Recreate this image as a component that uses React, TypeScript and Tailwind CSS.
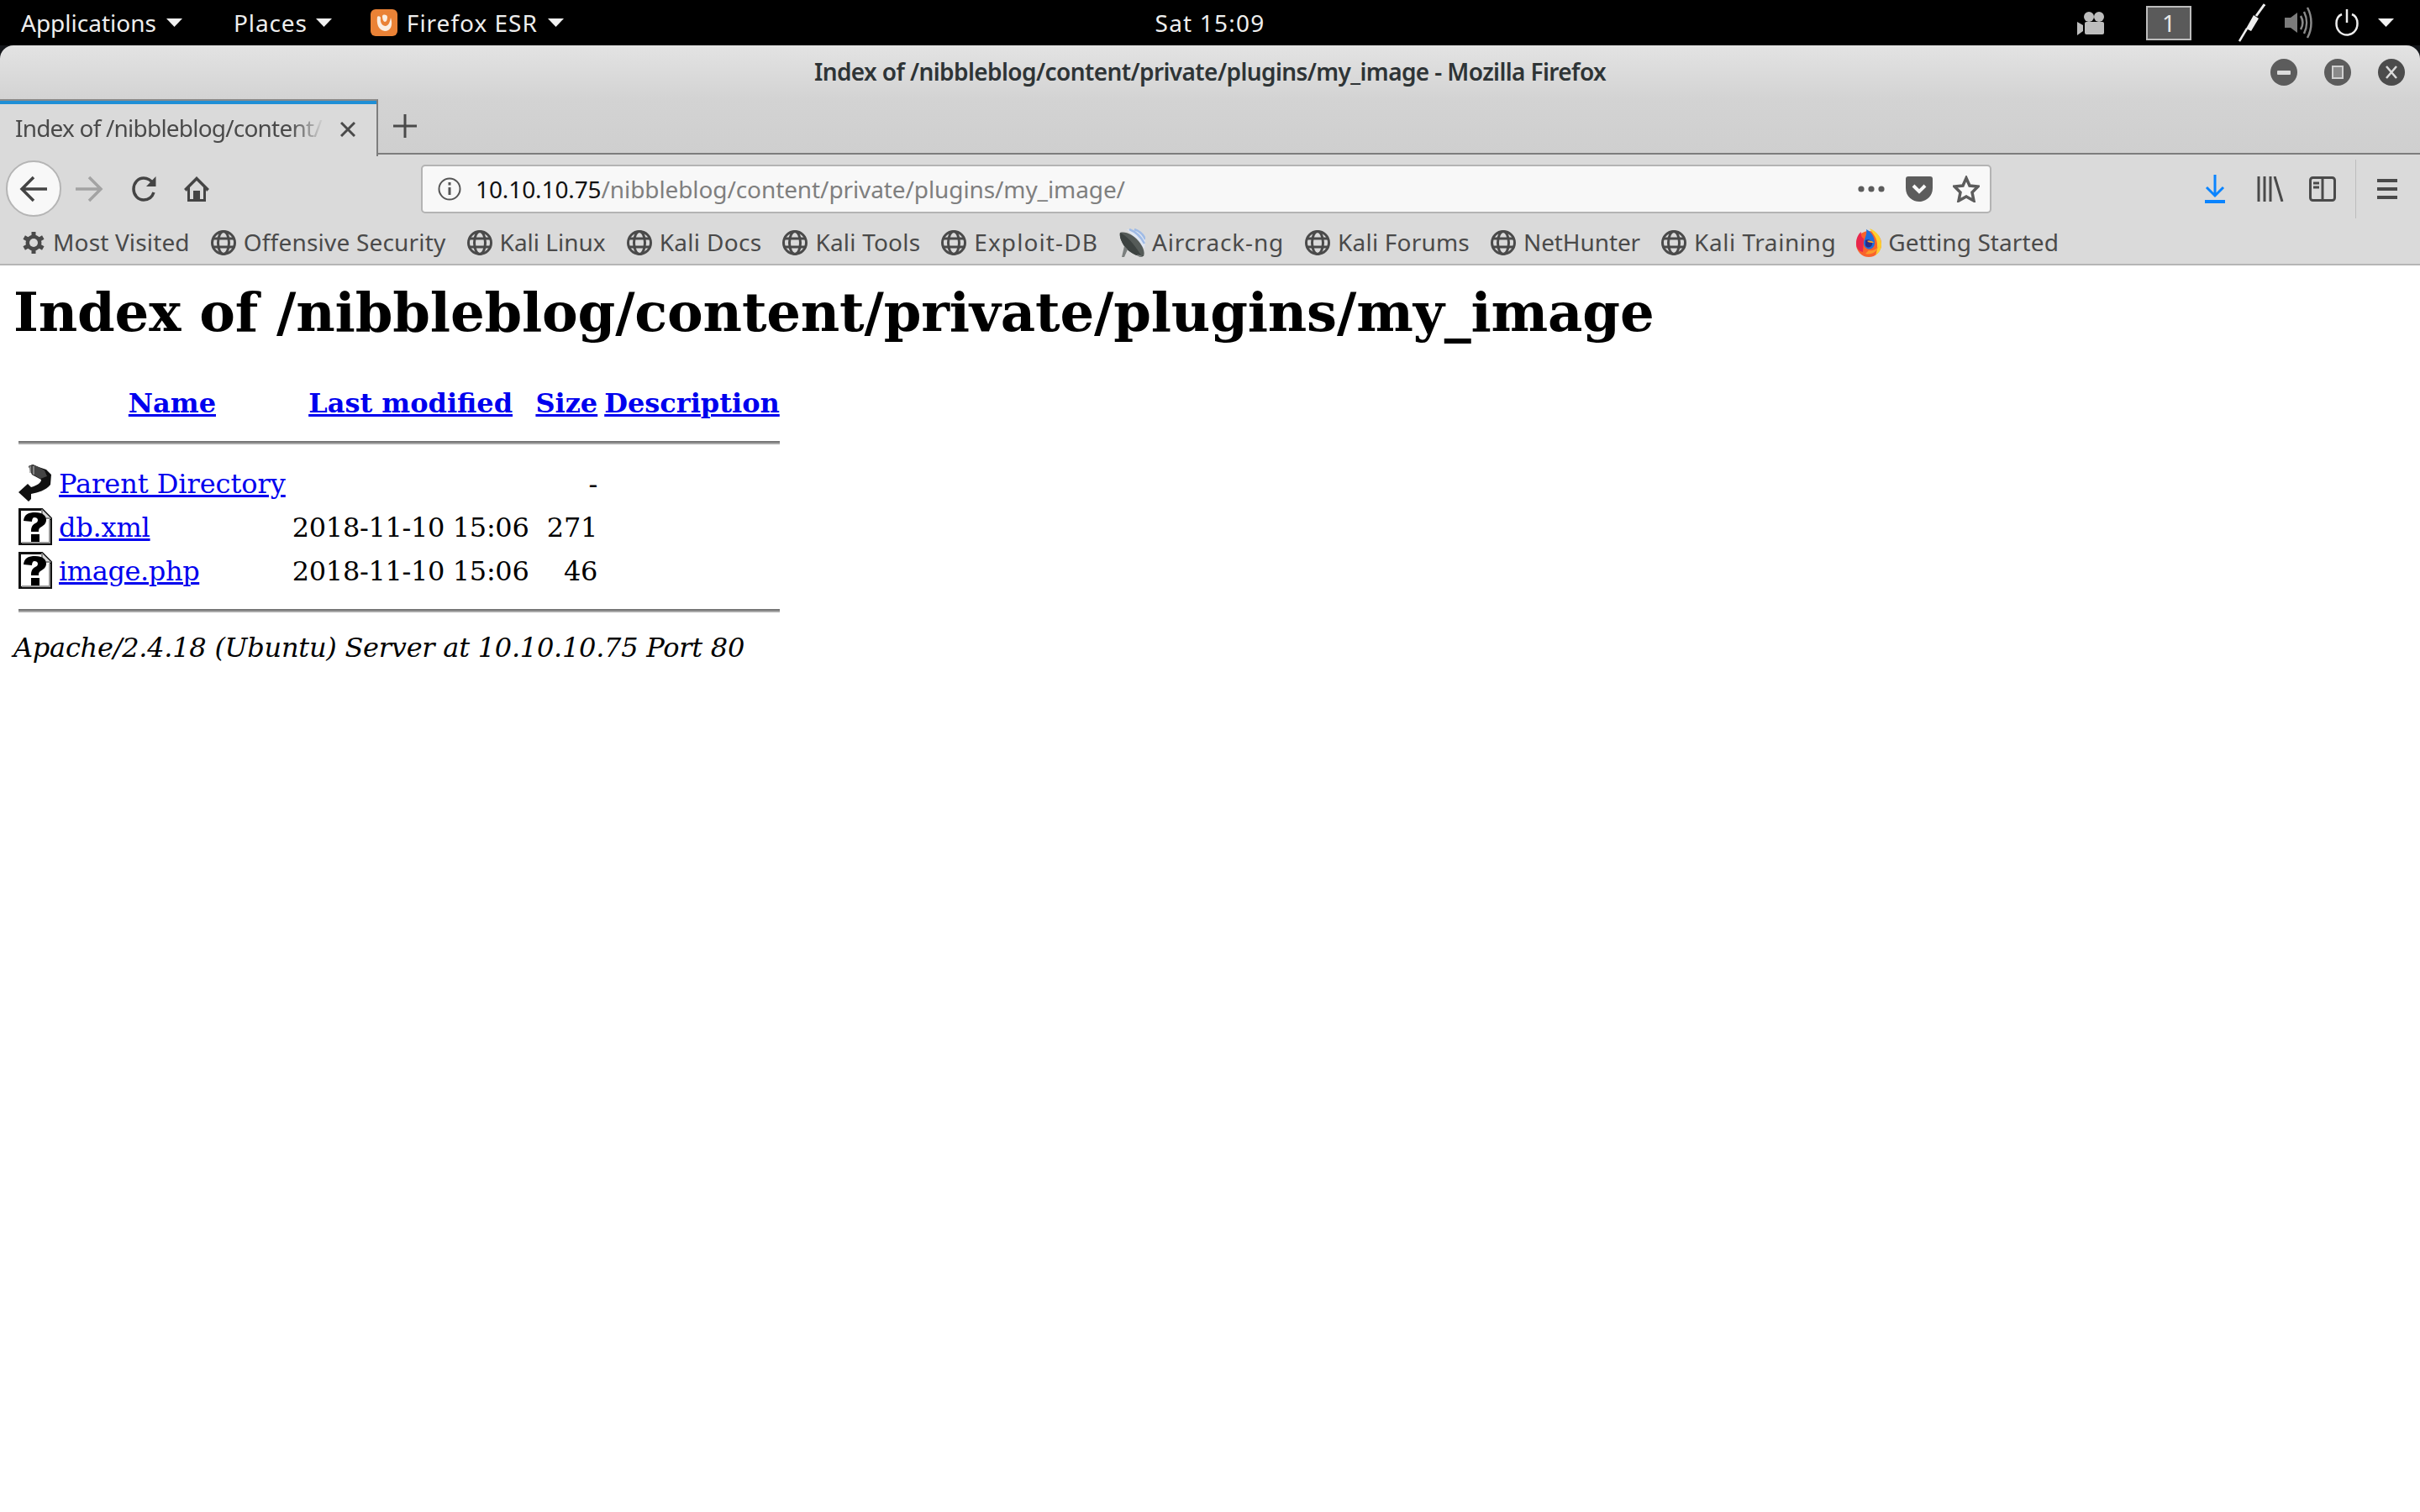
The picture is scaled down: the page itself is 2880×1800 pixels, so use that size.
import React from "react";

const Tri = () => (
  <svg width="19" height="10" viewBox="0 0 19 10" className="shrink-0"><path d="M0 0H19L9.5 10Z" fill="#f2f2f2" /></svg>
);

const Globe = () => (
  <svg width="32" height="32" viewBox="0 0 32 32" fill="none" stroke="#4a4a4a" strokeWidth="3" className="shrink-0">
    <circle cx="16" cy="16" r="13.5" />
    <ellipse cx="16" cy="16" rx="6.5" ry="13.5" />
    <path d="M3 11H29M3 21H29" />
  </svg>
);

const Gear = () => (
  <svg width="30" height="32" viewBox="0 0 30 32" className="shrink-0">
    <g stroke="#4a4a4a" strokeWidth="5">
      <path d="M15 3V29M3.7 9.5L26.3 22.5M3.7 22.5L26.3 9.5" />
    </g>
    <circle cx="15" cy="16" r="9.5" fill="#4a4a4a" />
    <circle cx="15" cy="16" r="5" fill="#dadada" />
  </svg>
);

const Dish = () => (
  <svg width="32" height="34" viewBox="0 0 32 34" className="shrink-0">
    <path d="M10 1L24 3L32 14L31 24Z" fill="#dfe6f2" />
    <path d="M13 1C21 4 27 10 31 18M19 1C25 3 30 8 32 13" stroke="#9fbbe6" strokeWidth="2.5" fill="none" />
    <path d="M2 5C9 3 18 8 24 15C29 21 32 28 30 33C23 34 13 29 7 21C3 15 1 9 2 5Z" fill="#555b58" />
    <path d="M2 5C9 8 18 17 27 32C29 33 30 33 30 33C23 34 13 29 7 21C3 15 1 9 2 5Z" fill="#3c4240" />
    <path d="M7 21L4 34H7L11 25ZM22 31L25 34H29L27 32Z" fill="#7b7f7e" />
  </svg>
);

const FirefoxLogo = () => (
  <svg width="30" height="34" viewBox="0 0 30 34" className="shrink-0">
    <ellipse cx="15" cy="18.5" rx="15" ry="15.5" fill="#f9622c" />
    <path d="M0 18C0 11 3 6 6 4C5 8 7 11 9 12L8 28C3 27 0 23 0 18Z" fill="#e8264c" />
    <path d="M16 0C24 3 30 10 30 19C30 25 27 29 23 32C26 25 26 15 22 9C20 6 18 3 16 0Z" fill="#fdd02f" />
    <path d="M11 30C18 32 25 28 27 20C25 25 20 27 15 26Z" fill="#fb9a2a" />
    <path d="M12 1C18 4 22 10 22 17C22 23 17 26 13 24C9 22 8 17 10 13C11 10 13 6 12 1Z" fill="#1f6fdc" />
    <path d="M11 14C15 12 20 15 19 19C18 23 13 24 11 20Z" fill="#2a2d87" />
    <path d="M13 15C16 14 20 15 21 17C18 17 15 17 13 15Z" fill="#f9a52e" />
  </svg>
);

const bookmarks: [string, React.ReactNode, string][] = [
  ["Most Visited", <Gear />, "tracking-[0.15px]"],
  ["Offensive Security", <Globe />, "tracking-[0.2px]"],
  ["Kali Linux", <Globe />, "tracking-[0px]"],
  ["Kali Docs", <Globe />, "tracking-[0.3px]"],
  ["Kali Tools", <Globe />, "tracking-[0.2px]"],
  ["Exploit-DB", <Globe />, "tracking-[1.1px]"],
  ["Aircrack-ng", <Dish />, "tracking-[0.8px]"],
  ["Kali Forums", <Globe />, "tracking-[0.2px]"],
  ["NetHunter", <Globe />, "tracking-[-0.1px]"],
  ["Kali Training", <Globe />, "tracking-[0.55px]"],
  ["Getting Started", <FirefoxLogo />, "tracking-[0.1px]"],
];

const QIcon = () => (
  <svg width="40" height="44" viewBox="0 0 40 44" className="inline-block align-top">
    <path d="M1.5 1.5H28L38.5 12V42.5H1.5Z" fill="#fff" stroke="#111" strokeWidth="3" />
    <path d="M28 1.5V12H38.5" fill="#d8d8d8" stroke="#888" strokeWidth="2" />
    <path d="M36 40H4V42H38V14H36Z" fill="#999" />
    <path d="M6 15C7 7 12 5 20 5C29 5 33 9 33 14C33 19 29 21 26 23C24 24 24 26 24 28H15C15 23 16 20 20 18C22 17 23 16 23 14C23 12 21 11 19 11C17 11 16 13 16 16Z" fill="#000" />
    <rect x="15" y="31" width="10" height="9" fill="#000" />
  </svg>
);

const BackIcon = () => (
  <svg width="40" height="44" viewBox="0 0 40 44" className="inline-block align-top">
    <path d="M12 2L17 0L24 3L33 6L39 12L38 24C32 31 24 33 15 35V41L12 44L0 33L11 23L15 27C22 25 27 22 27 18L16 12Z" fill="#111" />
    <path d="M12 2L17 0L24 3L31 7L34 14L26 17L16 11Z" fill="#444" />
    <path d="M14 2V10M18 2V12" stroke="#999" strokeWidth="1.5" />
  </svg>
);

const Link = ({ children, className }: { children: React.ReactNode; className?: string }) => (
  <a href="#" className={"text-[#0000ee] underline " + (className ?? "")}>{children}</a>
);

const Th = ({ children }: { children?: React.ReactNode }) => (
  <th className="p-[2px] font-bold text-center leading-[48px]">{children}</th>
);

const Row = ({ icon, name, date, size, nameTrack }: { icon: React.ReactNode; name: string; date: string; size: string; nameTrack?: string }) => (
  <tr className="leading-[46px]">
    <td className="p-[2px] align-top leading-[44px]">{icon}</td>
    <td className="p-[2px] align-top"><div className="h-[44px]"><Link className={nameTrack}>{name}</Link></div></td>
    <td className="p-[2px] align-top text-right tracking-[-0.33px] whitespace-nowrap"><div className="h-[44px]">{date}</div></td>
    <td className="p-[2px] align-top text-right tracking-[-0.2px]"><div className="h-[44px]">{size}</div></td>
    <td className="p-[2px] align-top"></td>
  </tr>
);

const Rule = ({ margin }: { margin: string }) => (
  <tr>
    <th colSpan={5} className="p-[2px]"><hr className={"border-0 border-t-[2px] border-b-[2px] border-t-[#777777] border-b-[#a8a8a8] " + margin} /></th>
  </tr>
);

export default function App() {
  const ui = { fontFamily: '"Noto Sans", sans-serif' };
  return (
    <div className="w-[2880px] h-[1800px] bg-white overflow-hidden flex flex-col relative" style={ui}>
      {/* GNOME panel */}
      <div className="h-[54px] bg-black text-[#eeeeee] text-[28px] grid grid-cols-[1fr_auto_1fr] items-center shrink-0">
        <div className="flex items-center pl-[25px] pb-[1px]">
          <span>Applications</span>
          <span className="ml-[12px]"><Tri /></span>
          <span className="ml-[61px] tracking-[0.9px]">Places</span>
          <span className="ml-[10px]"><Tri /></span>
          <svg width="32" height="32" viewBox="0 0 32 32" className="ml-[46px]">
            <rect width="32" height="32" rx="6" fill="#ea8236" />
            <path d="M8 9C7 17 9 25 17 26C24 26 27 19 24 10C23 15 22 19 18 20C14 20 11 16 12 10C11 8 9 8 8 9Z" fill="#fbeee2" />
            <path d="M14 8C15 6 19 6 20 9C20 12 19 15 17 15C15 15 14 11 14 8Z" fill="#fbeee2" />
          </svg>
          <span className="ml-[11px] tracking-[1px]">Firefox ESR</span>
          <span className="ml-[12px]"><Tri /></span>
        </div>
        <div className="text-center tracking-[1.2px] pb-[1px]">Sat 15:09</div>
        <div className="flex items-center justify-end">
          <svg width="32" height="32" viewBox="0 0 32 32">
            <circle cx="14" cy="9" r="6" fill="#bdbdbd" />
            <circle cx="26" cy="9" r="6" fill="#bdbdbd" />
            <rect x="9" y="15" width="23" height="15" rx="2" fill="#bdbdbd" />
            <path d="M0 15L7 19V26L0 31Z" fill="#bdbdbd" />
          </svg>
          <div className="ml-[50px] w-[54px] h-[41px] bg-[#5a5a5a] border-2 border-[#bdbdbd] flex items-center justify-center text-[28px] text-[#e8e8e8]">1</div>
          <svg width="32" height="46" viewBox="0 0 32 46" className="ml-[56px]">
            <path d="M1 45L10 30" stroke="#eeeeee" strokeWidth="2.5" />
            <path d="M9 30L18 14L24 18L15 33Z" fill="#eeeeee" />
            <path d="M21 15L31 1" stroke="#eeeeee" strokeWidth="3" />
          </svg>
          <svg width="33" height="44" viewBox="0 0 33 44" className="ml-[23px]" fill="none">
            <path d="M0 16H7L15 10V34L7 28H0Z" fill="#7c7c7c" />
            <path d="M19 14C22 19 22 25 19 30" stroke="#8a8a8a" strokeWidth="2.5" />
            <path d="M23 9C27 17 27 27 23 35" stroke="#8a8a8a" strokeWidth="2.5" />
            <path d="M27 4C33 15 33 29 27 40" stroke="#8a8a8a" strokeWidth="2.5" />
          </svg>
          <svg width="28" height="32" viewBox="0 0 28 32" fill="none" stroke="#eeeeee" strokeWidth="2.5" className="ml-[27px]">
            <path d="M14 0V16" />
            <path d="M8 6C3 8 1.5 13 1.5 17C1.5 25 7 30.5 14 30.5C21 30.5 26.5 25 26.5 17C26.5 13 25 8 20 6" />
          </svg>
          <span className="ml-[23px] mr-[31px]"><Tri /></span>
        </div>
      </div>

      {/* Firefox window */}
      <div className="bg-[#14161a] shrink-0">
        <div className="rounded-t-[16px] bg-gradient-to-b from-[#e3e3e3] via-[#d3d3d3] via-50% to-[#cfcfcf] h-[130px] flex flex-col">
          <div className="h-[64px] shrink-0 grid grid-cols-[1fr_auto_1fr] items-center">
            <div />
            <div className="text-[28px] font-semibold text-[#2e3436] tracking-[-0.6px] pb-[3px]">Index of /nibbleblog/content/private/plugins/my_image - Mozilla Firefox</div>
            <div className="flex justify-end items-center gap-[32px] pr-[18px]">
              <div className="w-[32px] h-[32px] rounded-full bg-[#5c5c5c] flex items-center justify-center">
                <div className="w-[16px] h-[5px] bg-[#dcdcdc] rounded-[1px]" />
              </div>
              <div className="w-[32px] h-[32px] rounded-full bg-[#5c5c5c] flex items-center justify-center">
                <div className="w-[14px] h-[16px] bg-[#8a8a8a] border-2 border-[#d0d0d0]" />
              </div>
              <div className="w-[32px] h-[32px] rounded-full bg-[#4c4c4c] flex items-center justify-center">
                <svg width="14" height="16" viewBox="0 0 14 16" stroke="#dcdcdc" strokeWidth="2.5"><path d="M1 1L13 15M13 1L1 15" /></svg>
              </div>
            </div>
          </div>
          {/* tab strip */}
          <div className="flex-1 flex items-stretch">
            <div className="w-[450px] shrink-0 border-t-[2px] border-t-[#8a8a8a] border-r-[2px] border-r-[#7d7d7d] bg-[#dadada] flex flex-col relative z-10 -mb-[2px]">
              <div className="h-[4px] bg-[#1f8fd6]" />
              <div className="flex-1 flex items-center pl-[18px] text-[#4a4a4a] text-[28px] whitespace-nowrap pb-[7px]">
                <span className="w-[372px] tracking-[-0.8px]" style={{ maskImage: "linear-gradient(to right, black 88%, transparent 99%)" }}>Index of /nibbleblog/content/</span>
                <svg width="18" height="18" viewBox="0 0 18 18" stroke="#4a4a4a" strokeWidth="3" className="ml-[15px] mt-[4px] shrink-0"><path d="M1 1L17 17M17 1L1 17" /></svg>
              </div>
            </div>
            <div className="flex-1 border-b-[2px] border-b-[#7d7d7d] flex items-center pl-[18px]">
              <svg width="28" height="28" viewBox="0 0 28 28" stroke="#4a4a4a" strokeWidth="3"><path d="M14 0V28M0 14H28" /></svg>
            </div>
          </div>
        </div>
      </div>

      {/* nav bar */}
      <div className="h-[81px] bg-[#dadada] flex items-center shrink-0 relative">
        <div className="ml-[7px] w-[66px] h-[67px] rounded-full bg-[#f8f8f8] border-2 border-[#b5b5b5] flex items-center justify-center shrink-0">
          <svg width="34" height="32" viewBox="0 0 34 32" fill="none" stroke="#444" strokeWidth="3.5"><path d="M33 16H3M17 2L3 16L17 30" /></svg>
        </div>
        <svg width="34" height="32" viewBox="0 0 34 32" fill="none" stroke="#a3a3a3" strokeWidth="3.5" className="ml-[16px] shrink-0"><path d="M1 16H31M17 2L31 16L17 30" /></svg>
        <svg width="32" height="32" viewBox="0 0 32 32" fill="none" stroke="#444" strokeWidth="3.5" className="ml-[33px] shrink-0">
          <path d="M27 20C25 26 21 29 15 29C8 29 3 23 3 16C3 9 8 3 15 3C20 3 24 6 27 10" />
          <path d="M29.5 1V13H18Z" fill="#444" stroke="none" />
        </svg>
        <svg width="32" height="32" viewBox="0 0 32 32" className="ml-[30px] shrink-0">
          <path d="M16 1L31 16L28 19L27 17V31H5V17L4 19L1 16Z" fill="#444" />
          <path d="M16 6L24 14V28H8V14Z" fill="#dadada" />
          <rect x="12" y="18" width="8" height="12" fill="#444" />
        </svg>
        <div className="ml-[251px] w-[1869px] h-[58px] rounded-[5px] bg-[#f8f8f8] border-2 border-[#b3b3b3] flex items-center shrink-0 text-[28px] tracking-[-0.1px]">
          <svg width="28" height="28" viewBox="0 0 28 28" fill="none" stroke="#555" strokeWidth="2" className="ml-[18px] shrink-0">
            <circle cx="14" cy="14" r="12.5" />
            <path d="M14 12V21" strokeWidth="3" />
            <path d="M14 6V9.5" strokeWidth="3" />
          </svg>
          <span className="ml-[17px] text-[#111]">10.10.10.75</span>
          <span className="text-[#7f7f7f]">/nibbleblog/content/private/plugins/my_image/</span>
          <div className="ml-auto flex items-center">
            <svg width="32" height="8" viewBox="0 0 32 8" fill="#5c5c5c"><circle cx="4" cy="4" r="3.6" /><circle cx="16" cy="4" r="3.6" /><circle cx="28" cy="4" r="3.6" /></svg>
            <svg width="32" height="30" viewBox="0 0 32 30" className="ml-[25px]">
              <path d="M3 0H29C31 0 32 1 32 3V14C32 24 24 30 16 30C8 30 0 24 0 14V3C0 1 1 0 3 0Z" fill="#5c5c5c" />
              <path d="M9 11L16 18L23 11" stroke="#f8f8f8" strokeWidth="4" fill="none" />
            </svg>
            <svg width="32" height="32" viewBox="0 0 32 32" fill="none" stroke="#5c5c5c" strokeWidth="3.5" className="ml-[24px] mr-[12px]">
              <path d="M16 3L20 12L30 13L23 20L25 30L16 25L7 30L9 20L2 13L12 12Z" />
            </svg>
          </div>
        </div>
        <svg width="26" height="34" viewBox="0 0 26 34" fill="none" stroke="#0a84ff" strokeWidth="3" className="ml-[253px] shrink-0">
          <path d="M13 0V24M3 15L13 25L23 15" />
          <path d="M1 32H25" strokeWidth="4" />
        </svg>
        <svg width="32" height="30" viewBox="0 0 32 30" stroke="#4a4a4a" strokeWidth="3" fill="none" className="ml-[37px] shrink-0">
          <path d="M2 0V30M9 0V30M16 0V30M21 0L30 30" />
        </svg>
        <svg width="32" height="30" viewBox="0 0 32 30" fill="none" stroke="#4a4a4a" strokeWidth="3" className="ml-[30px] shrink-0">
          <rect x="1.5" y="1.5" width="29" height="27" rx="3" />
          <path d="M16 1V29M5 8H12M5 13H12" />
        </svg>
        <div className="ml-[23px] w-[1px] h-[70px] bg-[#bdbdbd] shrink-0" />
        <svg width="24" height="24" viewBox="0 0 24 24" fill="#4a4a4a" className="ml-[25px] shrink-0">
          <rect y="0" width="24" height="4" /><rect y="10" width="24" height="4" /><rect y="20" width="24" height="4" />
        </svg>
      </div>

      {/* bookmarks */}
      <div className="h-[51px] bg-[#dadada] border-b-[2px] border-b-[#b5b5b5] flex items-center pl-[25px] pb-[2px] gap-[24px] shrink-0 text-[28px] text-[#4a4a4a]">
        {bookmarks.map(([label, icon, track]) => (
          <div key={label} className="flex items-center gap-[8px] whitespace-nowrap">
            {icon}
            <span className={"pb-[2px] " + track}>{label}</span>
          </div>
        ))}
      </div>

      {/* page */}
      <div className="flex-1 bg-white text-black text-[32px] px-[16px] pt-[18px]" style={{ fontFamily: '"DejaVu Serif", serif' }}>
        <h1 className="text-[64px] font-bold mb-[41px] leading-[75px] tracking-[-0.2px]">Index of /nibbleblog/content/private/plugins/my_image</h1>
        <table className="border-separate border-spacing-[4px]">
          <tbody>
            <tr>
              <Th><div className="w-[40px] h-[44px]" /></Th>
              <Th><Link>Name</Link></Th>
              <Th><Link>Last modified</Link></Th>
              <Th><Link>Size</Link></Th>
              <Th><Link>Description</Link></Th>
            </tr>
            <Rule margin="mt-[13px] mb-[16px]" />
            <Row icon={<BackIcon />} name="Parent Directory" date="" size="-" nameTrack="tracking-[-0.05px]" />
            <Row icon={<QIcon />} name="db.xml" date="2018-11-10 15:06" size="271" nameTrack="tracking-[-0.2px]" />
            <Row icon={<QIcon />} name="image.php" date="2018-11-10 15:06" size="46" nameTrack="tracking-[-0.4px]" />
            <Rule margin="mt-[16px] mb-[18px]" />
          </tbody>
        </table>
        <address className="italic leading-[37px] tracking-[-0.25px]">Apache/2.4.18 (Ubuntu) Server at 10.10.10.75 Port 80</address>
      </div>
    </div>
  );
}
